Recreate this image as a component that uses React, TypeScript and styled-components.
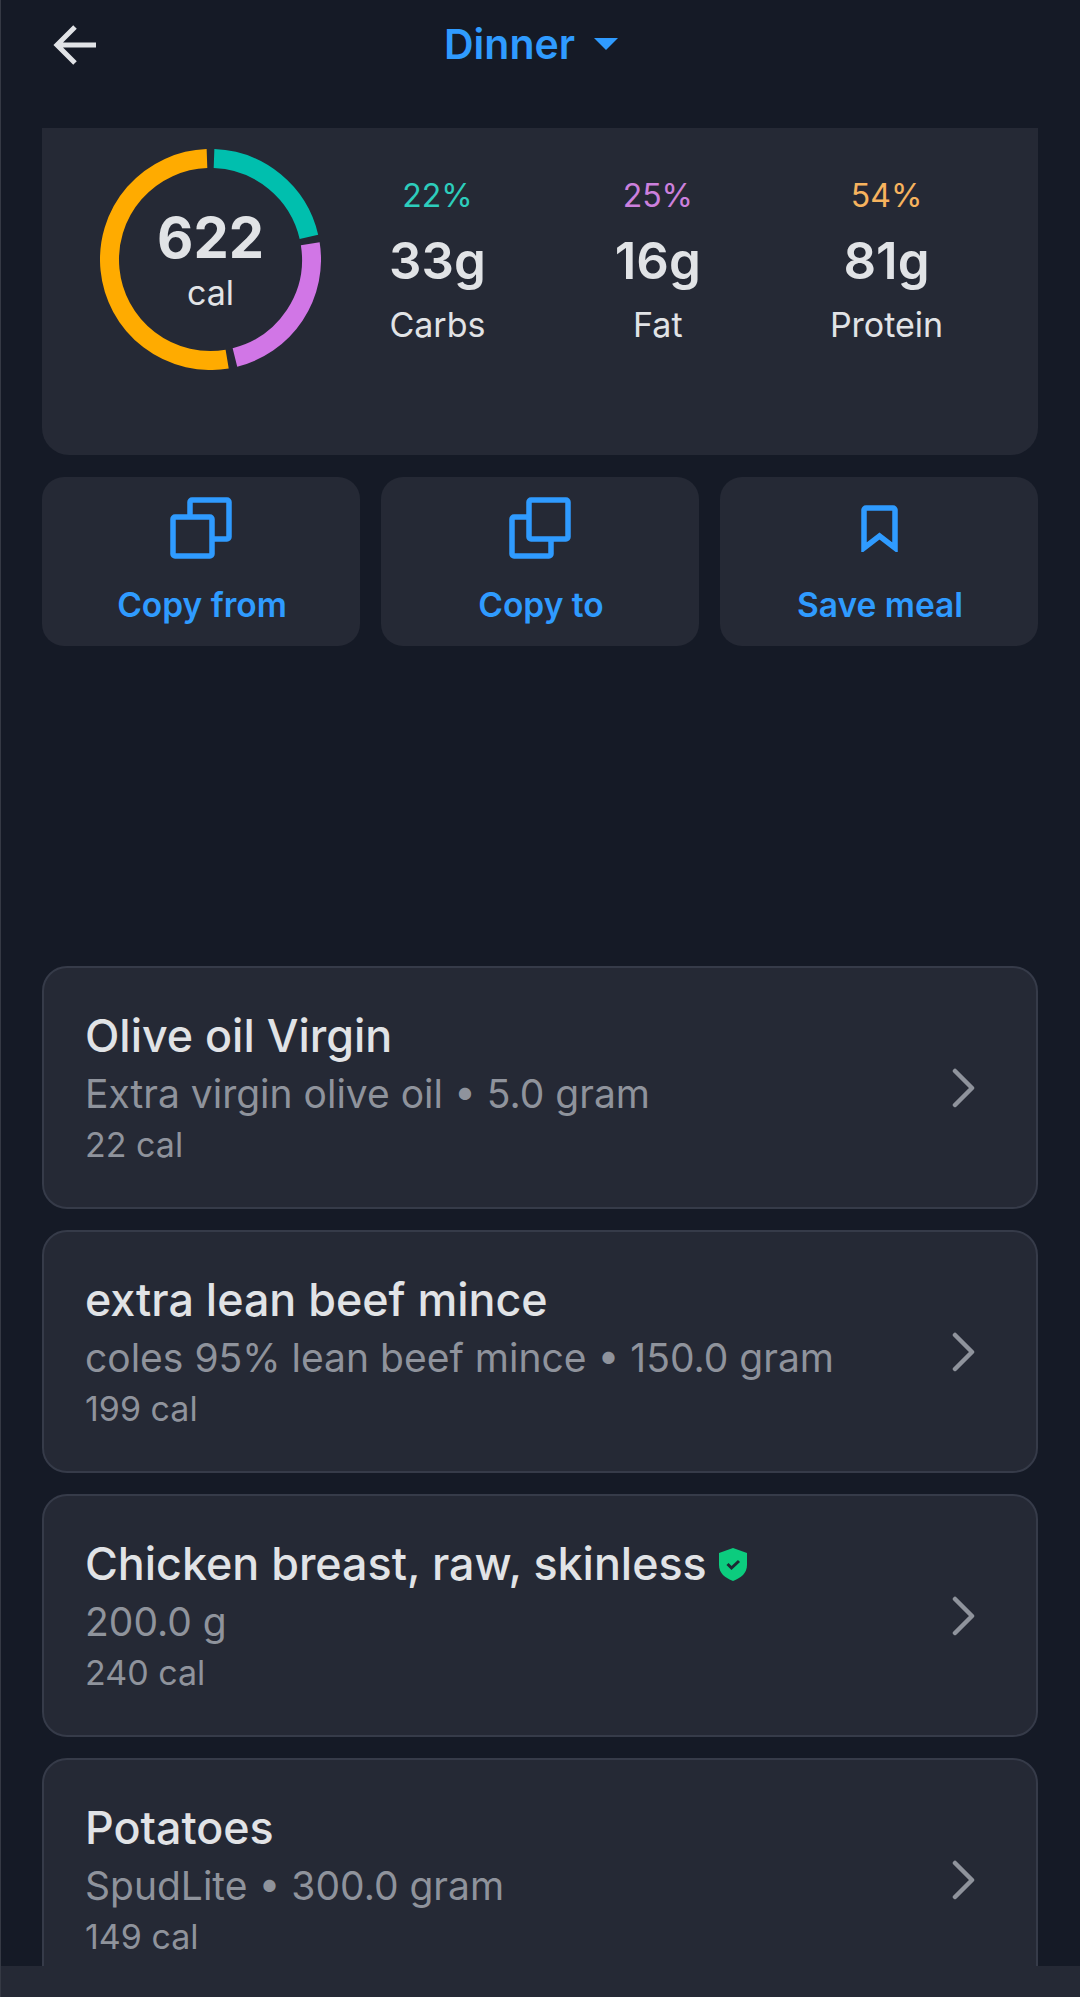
import React from 'react';
import styled, { createGlobalStyle } from 'styled-components';

const Global = createGlobalStyle`
  html, body { margin: 0; padding: 0; background: #151a26; }
  * { box-sizing: border-box; }
`;

const Page = styled.div`
  width: 1080px; height: 1997px; background: #151a26; display: flex; flex-direction: column;
  overflow: hidden; font-family: Inter, "Liberation Sans", sans-serif; color: #e1e3e6;
  border-left: 1px solid #353944;
`;
const Header = styled.header`
  height: 128px; flex: none; display: flex; align-items: flex-start; position: relative; padding: 24px 0 0 52px;
`;
const BackButton = styled.div` width: 44px; height: 42px; display: flex; `;
const TitleButton = styled.div`
  position: absolute; left: 443px; top: 20px; height: 48px; display: flex; align-items: center; gap: 19px;
  color: #2f9bff; font-size: 41px; font-weight: 600;
`;
const Caret = styled.span`
  width: 0; height: 0; border-left: 12.5px solid transparent; border-right: 12.5px solid transparent; border-top: 12px solid #2f9bff;
`;
const Content = styled.main`
  flex: 1; min-height: 0; overflow: hidden; padding: 0 42px 0 41px; display: flex; flex-direction: column;
`;
const Summary = styled.section`
  height: 327px; flex: none; background: #252935; border-radius: 0 0 27px 27px; padding: 21px 0 0 58px; display: flex; align-items: flex-start;
`;
const Ring = styled.div` position: relative; width: 221px; height: 221px; flex: none; `;
const RingText = styled.div`
  position: absolute; inset: 0; display: flex; flex-direction: column; align-items: center; padding-top: 61px;
`;
const RingValue = styled.div` font-size: 56px; font-weight: 700; line-height: 56px; `;
const RingUnit = styled.div` font-size: 34px; line-height: 40px; margin-top: 7px; `;
const Macros = styled.div` display: flex; gap: 129px; margin-left: 68px; padding-top: 27px; `;
const Macro = styled.div` display: flex; flex-direction: column; align-items: center; `;
const Percent = styled.div<{ $color: string }>` color: ${p => p.$color}; font-size: 32px; line-height: 40px; `;
const Grams = styled.div` font-size: 51px; font-weight: 600; line-height: 60px; margin-top: 15px; `;
const MacroName = styled.div` font-size: 34px; line-height: 42px; margin-top: 13px; `;

const Actions = styled.div` display: grid; grid-template-columns: repeat(3, 318px); gap: 21px; margin-top: 22px; flex: none; `;
const Action = styled.div`
  height: 169px; background: #252935; border-radius: 22px; display: flex; flex-direction: column; align-items: center;
  color: #2f9bff; font-size: 33.5px; font-weight: 600;
`;
const ActionIcon = styled.div` height: 62px; margin-top: 20px; display: flex; align-items: center; `;
const ActionLabel = styled.div` line-height: 42px; margin-top: 25px; margin-left: 2px; `;

const List = styled.div` display: flex; flex-direction: column; gap: 21px; margin-top: 320px; `;
const FoodCard = styled.article`
  height: 243px; flex: none; background: #252935; border: 2px solid #363b49; border-radius: 25px; display: flex; align-items: center;
  padding: 0 60px 0 41px; justify-content: space-between;
`;
const FoodText = styled.div` display: flex; flex-direction: column; `;
const FoodName = styled.div` font-size: 44.8px; font-weight: 500; line-height: 52px; display: flex; align-items: center; gap: 12px; `;
const FoodDetail = styled.div` font-size: 39px; line-height: 48px; color: #8f939c; margin-top: 8px; `;
const FoodCal = styled.div` font-size: 34px; line-height: 40px; color: #8f939c; margin-top: 7px; `;
const BottomBar = styled.footer` height: 31px; flex: none; background: #252935; margin-left: -1px; `;

const polar = (r: number, deg: number) => {
  const a = ((deg - 90) * Math.PI) / 180;
  return `${110.5 + r * Math.cos(a)} ${110.5 + r * Math.sin(a)}`;
};
const arc = (a: number, b: number) => `M${polar(101, a)}A101 101 0 ${b - a > 180 ? 1 : 0} 1 ${polar(101, b)}`;

const segments = [
  { color: '#00bfae', from: 2, to: 77 },
  { color: '#d176e6', from: 81, to: 166 },
  { color: '#ffab00', from: 170.5, to: 358 },
];

const macros = [
  { pct: '22%', color: '#2dcdbc', g: '33g', name: 'Carbs' },
  { pct: '25%', color: '#cc80dd', g: '16g', name: 'Fat' },
  { pct: '54%', color: '#f7b35e', g: '81g', name: 'Protein' },
];

const CopyIcon = ({ front }: { front: 'low' | 'high' }) => {
  const low = <rect x="3" y="20" width="39" height="39" rx="2" fill={front === 'low' ? '#252935' : 'none'} stroke="#2f9bff" strokeWidth="5.500" />;
  const high = <rect x="20" y="3" width="39" height="39" rx="2" fill={front === 'high' ? '#252935' : 'none'} stroke="#2f9bff" strokeWidth="5.500" />;
  return (
    <svg width="62" height="62" viewBox="0 0 62 62">
      {front === 'low' ? high : low}
      {front === 'low' ? low : high}
    </svg>
  );
};

const foods = [
  { name: 'Olive oil Virgin', detail: 'Extra virgin olive oil • 5.0 gram', cal: '22 cal' },
  { name: 'extra lean beef mince', detail: 'coles 95% lean beef mince • 150.0 gram', cal: '199 cal' },
  { name: 'Chicken breast, raw, skinless', detail: '200.0 g', cal: '240 cal', verified: true },
  { name: 'Potatoes', detail: 'SpudLite • 300.0 gram', cal: '149 cal' },
];

export default function App() {
  return (
    <Page>
      <Global />
      <Header>
        <BackButton>
          <svg width="44" height="42" viewBox="0 0 44 42" fill="none" stroke="#e1e3e6" strokeWidth="5">
            <path d="M43 21H4M22 3 4 21l18 18" />
          </svg>
        </BackButton>
        <TitleButton>Dinner<Caret /></TitleButton>
      </Header>
      <Content>
        <Summary>
          <Ring>
            <svg width="221" height="221" viewBox="0 0 221 221" fill="none" strokeWidth="19">
              {segments.map(s => <path key={s.color} d={arc(s.from, s.to)} stroke={s.color} />)}
            </svg>
            <RingText>
              <RingValue>622</RingValue>
              <RingUnit>cal</RingUnit>
            </RingText>
          </Ring>
          <Macros>
            {macros.map(m => (
              <Macro key={m.name}>
                <Percent $color={m.color}>{m.pct}</Percent>
                <Grams>{m.g}</Grams>
                <MacroName>{m.name}</MacroName>
              </Macro>
            ))}
          </Macros>
        </Summary>
        <Actions>
          <Action>
            <ActionIcon><CopyIcon front="low" /></ActionIcon>
            <ActionLabel>Copy from</ActionLabel>
          </Action>
          <Action>
            <ActionIcon><CopyIcon front="high" /></ActionIcon>
            <ActionLabel>Copy to</ActionLabel>
          </Action>
          <Action>
            <ActionIcon>
              <svg width="37" height="47" viewBox="0 0 37 47" fill="none" stroke="#2f9bff" strokeWidth="5.500">
                <path d="M3 43V5a2 2 0 0 1 2-2h27a2 2 0 0 1 2 2v38L18.500 31Z" />
              </svg>
            </ActionIcon>
            <ActionLabel>Save meal</ActionLabel>
          </Action>
        </Actions>
        <List>
          {foods.map(f => (
            <FoodCard key={f.name}>
              <FoodText>
                <FoodName>
                  {f.name}
                  {f.verified && (
                    <svg width="28" height="33" viewBox="0 0 28 33">
                      <path d="M14 0 28 5v12c0 8-6 13-14 16C6 30 0 25 0 17V5Z" fill="#0ccc7e" />
                      <path d="M8.500 16 12.500 20 20 13" fill="none" stroke="#1c2a33" strokeWidth="3" />
                    </svg>
                  )}
                </FoodName>
                <FoodDetail>{f.detail}</FoodDetail>
                <FoodCal>{f.cal}</FoodCal>
              </FoodText>
              <svg width="24" height="40" viewBox="0 0 24 40" fill="none" stroke="#8f939c" strokeWidth="4.500" strokeLinecap="round" strokeLinejoin="round">
                <path d="M3 3 20 20 3 37" />
              </svg>
            </FoodCard>
          ))}
        </List>
      </Content>
      <BottomBar />
    </Page>
  );
}
